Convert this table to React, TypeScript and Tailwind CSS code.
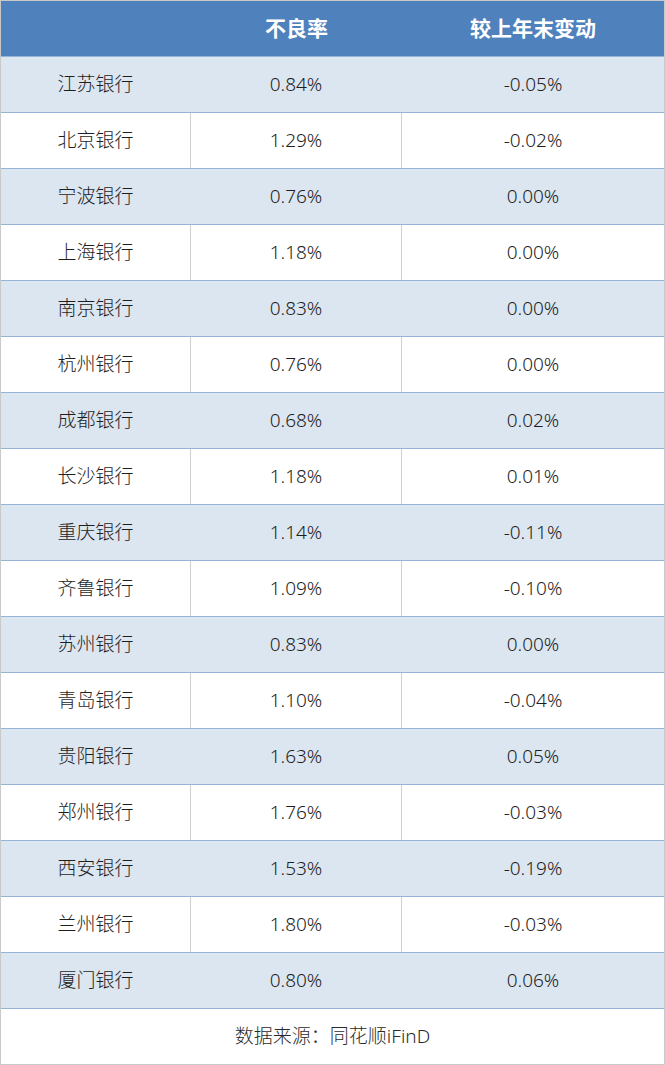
const rows: [string, string, string][] = [
  ['江苏银行', '0.84%', '-0.05%'],
  ['北京银行', '1.29%', '-0.02%'],
  ['宁波银行', '0.76%', '0.00%'],
  ['上海银行', '1.18%', '0.00%'],
  ['南京银行', '0.83%', '0.00%'],
  ['杭州银行', '0.76%', '0.00%'],
  ['成都银行', '0.68%', '0.02%'],
  ['长沙银行', '1.18%', '0.01%'],
  ['重庆银行', '1.14%', '-0.11%'],
  ['齐鲁银行', '1.09%', '-0.10%'],
  ['苏州银行', '0.83%', '0.00%'],
  ['青岛银行', '1.10%', '-0.04%'],
  ['贵阳银行', '1.63%', '0.05%'],
  ['郑州银行', '1.76%', '-0.03%'],
  ['西安银行', '1.53%', '-0.19%'],
  ['兰州银行', '1.80%', '-0.03%'],
  ['厦门银行', '0.80%', '0.06%'],
];

export default function App() {
  return (
    <div
      className="w-[665px] border border-[#c9c9c9] bg-white text-[19px] font-light text-[#1e1e1e]"
      style={{ fontFamily: '"Noto Sans", "Noto Sans CJK SC", sans-serif' }}
    >
      <div className="flex h-[56px] border-b border-[#95b3d7] bg-[#4f81bd] text-[21px] font-bold text-white">
        <div className="w-[190px]" />
        <div className="flex w-[211px] items-center justify-center">不良率</div>
        <div className="flex flex-1 items-center justify-center">较上年末变动</div>
      </div>
      {rows.map(([name, rate, change], i) => {
        const shaded = i % 2 === 0;
        const divider = shaded ? 'border-transparent' : 'border-[#cfcfcf]';
        return (
          <div
            key={name}
            className={`flex h-[56px] border-b border-b-[#95b3d7] ${shaded ? 'bg-[#dce6f1]' : 'bg-white'}`}
          >
            <div className={`flex w-[190px] items-center justify-center border-r ${divider}`}>{name}</div>
            <div className={`flex w-[211px] items-center justify-center border-r ${divider}`}>{rate}</div>
            <div className="flex flex-1 items-center justify-center">{change}</div>
          </div>
        );
      })}
      <div className="flex h-[55px] items-center justify-center text-[#2a2a2a]">数据来源：同花顺iFinD</div>
    </div>
  );
}
